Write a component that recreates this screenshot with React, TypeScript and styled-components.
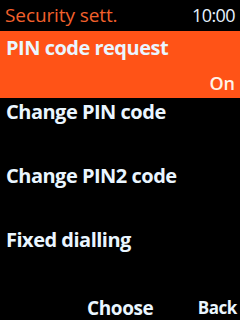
import React from "react";
import styled, { createGlobalStyle } from "styled-components";

const Global = createGlobalStyle`
  html, body { margin: 0; padding: 0; background: #000; }
  body { font-family: "Open Sans", "DejaVu Sans", sans-serif; }
`;

const Screen = styled.div`
  width: 240px;
  height: 320px;
  background: #000;
  display: flex;
  flex-direction: column;
  overflow: hidden;
`;

const Header = styled.div`
  height: 31px;
  display: flex;
  align-items: center;
  justify-content: space-between;
  padding: 0 5px 1px 5px;
  box-sizing: border-box;
  line-height: 20px;
`;

const Title = styled.span`
  color: #f2602c;
  font-size: 19px;
  letter-spacing: -0.1px;
`;

const Clock = styled.span`
  color: #e6f2ff;
  font-size: 18px;
  letter-spacing: -0.6px;
`;

const List = styled.div`
  display: flex;
  flex-direction: column;
  flex: 1;
`;

const Row = styled.div<{ $selected?: boolean }>`
  height: ${(p) => (p.$selected ? 67 : 64)}px;
  box-sizing: border-box;
  padding: ${(p) => (p.$selected ? 5 : 2)}px 5px 0 6px;
  background: ${(p) => (p.$selected ? "#ff5317" : "transparent")};
  display: flex;
  flex-direction: column;
`;

const Label = styled.div`
  color: #eaf6ff;
  font-size: 20px;
  font-weight: 700;
  line-height: 24px;
  letter-spacing: -0.5px;
`;

const Value = styled.div`
  color: #fff3ea;
  font-size: 18px;
  font-weight: 600;
  line-height: 22px;
  text-align: right;
  margin-top: 12px;
`;

const SoftKeys = styled.div`
  height: 30px;
  display: flex;
  align-items: center;
  padding: 0 3px 0 87px;
  justify-content: space-between;
`;

const Soft = styled.span<{ $small?: boolean }>`
  color: #eaf6ff;
  font-weight: 700;
  font-size: ${(p) => (p.$small ? 17 : 19)}px;
  line-height: 24px;
  letter-spacing: -0.4px;
  margin-top: 6px;
`;

export default function App() {
  return (
    <>
      <Global />
      <Screen>
        <Header>
          <Title>Security sett.</Title>
          <Clock>10:00</Clock>
        </Header>
        <List>
          <Row $selected>
            <Label>PIN code request</Label>
            <Value>On</Value>
          </Row>
          <Row>
            <Label>Change PIN code</Label>
          </Row>
          <Row>
            <Label>Change PIN2 code</Label>
          </Row>
          <Row>
            <Label>Fixed dialling</Label>
          </Row>
        </List>
        <SoftKeys>
          <Soft>Choose</Soft>
          <Soft $small>Back</Soft>
        </SoftKeys>
      </Screen>
    </>
  );
}
